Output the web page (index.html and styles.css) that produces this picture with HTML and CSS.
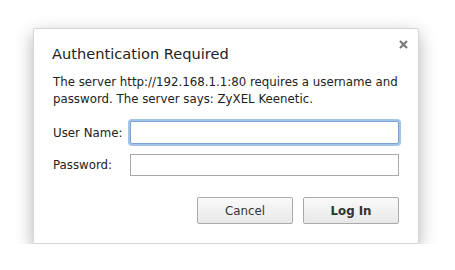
FILE: index.html
```html
<!DOCTYPE html>
<html>
<head>
<meta charset="utf-8">
<link rel="stylesheet" href="styles.css">
</head>
<body>
<div class="dialog">
  <svg class="close" width="9" height="9" viewBox="0 0 9 9"><path d="M1 1L8 8M8 1L1 8" stroke="#7a7a7a" stroke-width="2.2" stroke-linecap="butt"/></svg>
  <h1 class="title">Authentication Required</h1>
  <p class="msg">The server http://192.168.1.1:80 requires a username and password. The server says: ZyXEL Keenetic.</p>
  <div class="form">
    <label class="lbl">User Name:</label>
    <input class="field focused" type="text">
    <label class="lbl">Password:</label>
    <input class="field" type="password">
  </div>
  <div class="buttons">
    <button class="btn">Cancel</button>
    <button class="btn primary">Log In</button>
  </div>
</div>
</body>
</html>
```
FILE: styles.css
```css
html, body {
  margin: 0;
  padding: 0;
  background: #fff;
}
body {
  padding: 28px 0 0 33px;
  font-family: "DejaVu Sans", "Liberation Sans", sans-serif;
  color: #222;
}
.dialog {
  position: relative;
  box-sizing: border-box;
  width: 386px;
  height: 216px;
  background: #fff;
  border: 1px solid #d6d6d6;
  border-radius: 2px;
  box-shadow: 0 6px 18px rgba(0,0,0,0.3);
  padding: 15px 19px 0 18px;
}
.close {
  position: absolute;
  right: 10px;
  top: 11px;
}
.title {
  margin: 0;
  font-size: 14.6px;
  font-weight: normal;
  line-height: 20px;
  color: #222;
}
.msg {
  margin: 10px 0 0 1px;
  font-size: 11.8px;
  line-height: 17px;
  color: #222;
}
.form {
  margin-top: 13px;
  display: grid;
  grid-template-columns: 78px 269px;
  row-gap: 10px;
  align-items: center;
}
.lbl {
  font-size: 11.8px;
  color: #222;
  padding-left: 1px;
}
.field {
  box-sizing: border-box;
  height: 22px;
  width: 269px;
  margin: 0;
  border: 1px solid #aaa;
  background: #fff;
  outline: none;
}
.field.focused {
  height: 23px;
  border: 1px solid #7aa3d6;
  box-shadow: 0 0 0 2px #a3c3e8;
  border-radius: 2px;
}
.buttons {
  margin-top: 21px;
  display: flex;
  justify-content: flex-end;
  gap: 10px;
}
.btn {
  box-sizing: border-box;
  width: 96px;
  height: 27px;
  border: 1px solid #aaa;
  border-radius: 2px;
  background: linear-gradient(#fafafa, #e8e8e8);
  font-family: "DejaVu Sans", "Liberation Sans", sans-serif;
  font-size: 11.8px;
  color: #333;
}
.btn.primary {
  font-weight: bold;
}
```
